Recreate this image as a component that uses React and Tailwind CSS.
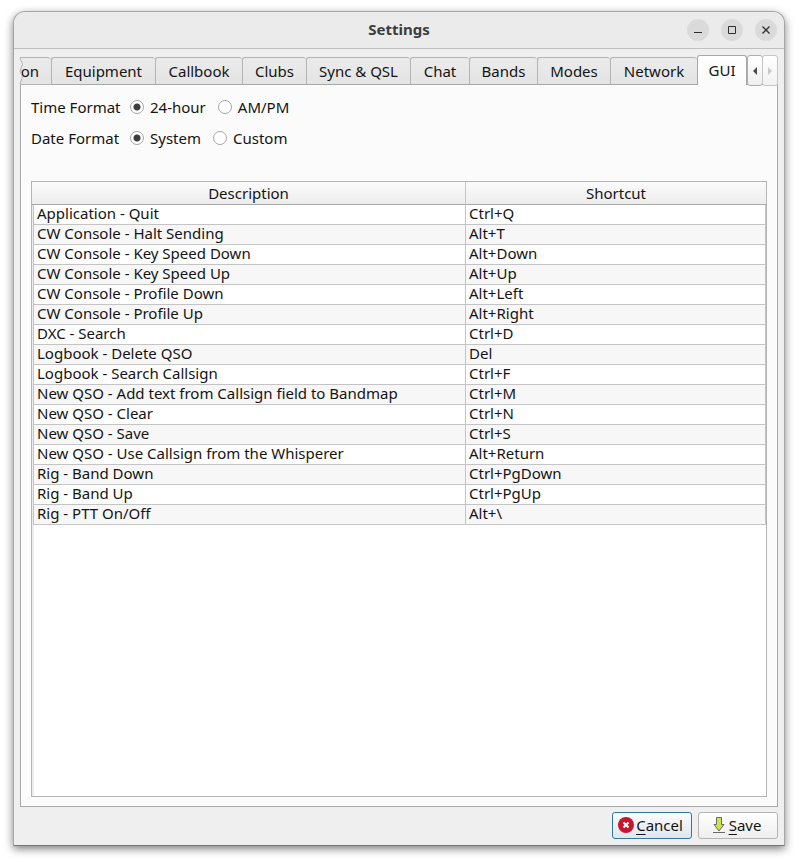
import React, { useState } from "react";

const tabs = [
  { name: "Equipment", width: "w-[104px]" },
  { name: "Callbook", width: "w-[87px]" },
  { name: "Clubs", width: "w-[64px]" },
  { name: "Sync & QSL", width: "w-[104px]" },
  { name: "Chat", width: "w-[59px]" },
  { name: "Bands", width: "w-[68px]" },
  { name: "Modes", width: "w-[73px]" },
  { name: "Network", width: "w-[87px]" },
  { name: "GUI", width: "w-[50px]" },
];

const shortcuts = [
  ["Application - Quit", "Ctrl+Q"],
  ["CW Console - Halt Sending", "Alt+T"],
  ["CW Console - Key Speed Down", "Alt+Down"],
  ["CW Console - Key Speed Up", "Alt+Up"],
  ["CW Console - Profile Down", "Alt+Left"],
  ["CW Console - Profile Up", "Alt+Right"],
  ["DXC - Search", "Ctrl+D"],
  ["Logbook - Delete QSO", "Del"],
  ["Logbook - Search Callsign", "Ctrl+F"],
  ["New QSO - Add text from Callsign field to Bandmap", "Ctrl+M"],
  ["New QSO - Clear", "Ctrl+N"],
  ["New QSO - Save", "Ctrl+S"],
  ["New QSO - Use Callsign from the Whisperer", "Alt+Return"],
  ["Rig - Band Down", "Ctrl+PgDown"],
  ["Rig - Band Up", "Ctrl+PgUp"],
  ["Rig - PTT On/Off", "Alt+\\"],
];

const WindowButton = ({ label, children }) => (
  <button
    aria-label={label}
    className="flex size-[22px] items-center justify-center rounded-full bg-[#dadada] hover:bg-[#cfcfcf]"
  >
    <svg width="10" height="10" viewBox="0 0 10 10" fill="none" stroke="#2e2e2e">
      {children}
    </svg>
  </button>
);

const TitleBar = () => (
  <header className="grid h-[37px] shrink-0 grid-cols-[1fr_auto_1fr] items-center rounded-t-xl border-b border-[#bfbfbf] bg-[#ebebeb] px-[7px]">
    <span />
    <h1 className="pb-[2px] text-[15px] font-bold text-[#3d3d3d]">Settings</h1>
    <div className="flex justify-end gap-3">
      <WindowButton label="Minimize">
        <path d="M1 7.5h8" />
      </WindowButton>
      <WindowButton label="Maximize">
        <path d="M1.5 1.5h7v7h-7z" />
      </WindowButton>
      <WindowButton label="Close">
        <path d="M1.5 1.5l7 7M8.5 1.5l-7 7" strokeWidth="1.3" />
      </WindowButton>
    </div>
  </header>
);

const RadioGroup = ({ title, name, options }) => {
  const [value, setValue] = useState(options[0]);

  return (
    <div role="radiogroup" aria-label={title} className="flex h-[21px] items-center">
      <span className="w-[99px]">{title}</span>
      <div className="flex gap-3">
        {options.map((option) => (
          <label key={option} className="flex items-center gap-[6px]">
            <input
              type="radio"
              name={name}
              checked={value === option}
              onChange={() => setValue(option)}
              className="size-[14px] appearance-none rounded-full border border-[#a6a6a6] bg-white checked:bg-[radial-gradient(circle,#3c3c3c_0,#3c3c3c_3px,white_4px)]"
            />
            {option}
          </label>
        ))}
      </div>
    </div>
  );
};

const TabBar = ({ active, onSelect }) => (
  <div className="z-10 flex h-[30px] items-end">
    <div role="tablist" className="flex min-w-0 flex-1 items-end">
      <button
        role="tab"
        aria-selected={false}
        className="relative h-[28px] w-[31px] rounded-tr-sm border-t border-b border-[#b4b4b4] bg-gradient-to-b from-[#ebebeb] to-[#e4e4e4] pr-3 pb-px text-right"
      >
        on
        <svg
          className="absolute top-0 -left-px"
          width="5"
          height="26"
          viewBox="0 0 5 26"
          fill="#efefef"
          stroke="#b4b4b4"
        >
          <path d="M1 0L3.500 6L1 13L3.500 19L1 26" />
        </svg>
      </button>
      {tabs.map(({ name, width }) => (
        <button
          key={name}
          role="tab"
          aria-selected={active === name}
          onClick={() => onSelect(name)}
          className={`${width} shrink-0 rounded-t-[3px] border-l border-t whitespace-nowrap ${
            active === name
              ? "h-[30px] border-r border-[#a8a8a8] bg-gradient-to-b from-white to-[#fbfbfb] pb-[2px]"
              : "h-[28px] border-b border-[#b4b4b4] border-b-[#a8a8a8] bg-gradient-to-b from-[#ebebeb] to-[#e4e4e4] pb-px"
          }`}
        >
          {name}
        </button>
      ))}
    </div>
    <div className="-mb-px flex h-[31px]">
      <button
        aria-label="Scroll tabs left"
        className="flex w-4 items-center justify-center rounded-[3px] border border-[#adadad] bg-gradient-to-b from-white to-[#efefef]"
      >
        <svg width="4" height="8" viewBox="0 0 4 8" fill="#4a4a4a">
          <path d="M4 0v8L0 4z" />
        </svg>
      </button>
      <button
        aria-label="Scroll tabs right"
        disabled
        className="-ml-px flex w-4 items-center justify-center rounded-[3px] border border-[#c6c6c6] bg-gradient-to-b from-white to-[#f1f1f1]"
      >
        <svg width="4" height="8" viewBox="0 0 4 8" fill="#c8c8c8">
          <path d="M0 0v8l4-4z" />
        </svg>
      </button>
    </div>
  </div>
);

const ShortcutTable = () => (
  <div className="mt-[33px] flex-1 border border-[#b4b4b4] bg-white bg-[linear-gradient(to_right,#ececec_2px,transparent_2px)]">
    <table className="w-full table-fixed border-separate border-spacing-0">
      <thead>
        <tr className="h-[23px] bg-gradient-to-b from-[#fbfbfb] to-[#ececec]">
          <th className="border-b border-r border-b-[#a8a8a8] border-r-[#c4c4c4] p-0 font-normal">
            Description
          </th>
          <th className="w-[300px] border-b border-[#a8a8a8] p-0 font-normal">Shortcut</th>
        </tr>
      </thead>
      <tbody className="leading-[17px]">
        {shortcuts.map(([description, keys]) => (
          <tr key={description} className="group">
            <td className="py-0 pr-0 pl-px">
              <div className="border-x border-b border-[#c4c4c4] bg-white pb-[2px] pl-[3px] whitespace-nowrap group-even:bg-[#f7f7f7]">
                {description}
              </div>
            </td>
            <td className="border-r border-b border-[#c4c4c4] bg-white pt-0 pr-0 pb-[2px] pl-[3px] group-even:bg-[#f7f7f7]">
              {keys}
            </td>
          </tr>
        ))}
      </tbody>
    </table>
  </div>
);

const CancelIcon = () => (
  <svg width="16" height="16" viewBox="0 0 16 16">
    <circle cx="8" cy="8" r="8" fill="#c7162b" />
    <path d="M5.500 5.500l5 5M10.500 5.500l-5 5" stroke="white" strokeWidth="2" />
  </svg>
);

const SaveIcon = () => (
  <svg width="12" height="16" viewBox="0 0 12 16" stroke="#6a6a6a">
    <path d="M3.500 .5h5v7h2.500L6 14L1 7.500h2.500z" fill="#cde34f" />
    <path d="M0 15.500h12" />
  </svg>
);

const App = () => {
  const [active, setActive] = useState("GUI");

  return (
    <div className="flex h-screen flex-col bg-white px-[13px] pt-[11px] pb-4 font-['Noto_Sans','Open_Sans',sans-serif] text-[15px] leading-5 text-[#141414]">
      <div className="flex flex-1 flex-col rounded-t-xl border border-[#a5a5a5] border-b-[#767676] bg-[#efefef] shadow-[0_3px_9px_rgba(0,0,0,0.5)]">
        <TitleBar />
        <main className="flex flex-1 flex-col px-[6px] pt-[6px] pb-[6px]">
          <TabBar active={active} onSelect={setActive} />
          <section
            role="tabpanel"
            aria-label={active}
            className="-mt-px flex flex-1 flex-col border border-[#a8a8a8] bg-[#fbfbfb] px-[10px] pt-[11px] pb-[9px]"
          >
            <div className="flex flex-col gap-[10px]">
              <RadioGroup title="Time Format" name="time" options={["24-hour", "AM/PM"]} />
              <RadioGroup title="Date Format" name="date" options={["System", "Custom"]} />
            </div>
            <ShortcutTable />
          </section>
          <footer className="mt-[5px] flex justify-end gap-[6px]">
            <button className="flex h-[27px] w-20 items-center justify-center gap-[2px] rounded-[3px] border border-[#2f78a8] bg-gradient-to-b from-[#fbfcfd] to-[#dfe6ec] pr-[3px] pb-[2px]">
              <CancelIcon />
              <span>
                <span className="underline underline-offset-3">C</span>ancel
              </span>
            </button>
            <button className="flex h-[27px] w-20 items-center justify-center gap-1 rounded-[3px] border border-[#b4b4b4] bg-gradient-to-b from-white to-[#eeeeee] pr-[2px] pb-[2px]">
              <SaveIcon />
              <span>
                <span className="underline underline-offset-3">S</span>ave
              </span>
            </button>
          </footer>
        </main>
      </div>
    </div>
  );
};

export default App;
